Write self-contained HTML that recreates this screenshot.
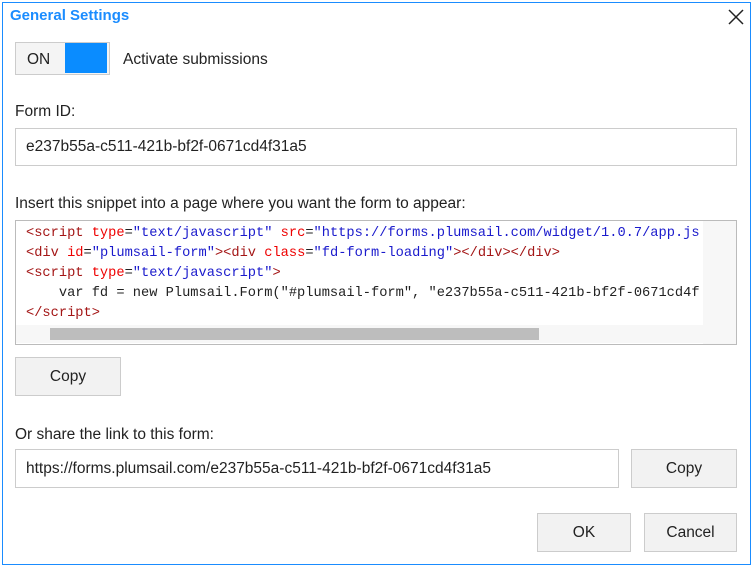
<!DOCTYPE html>
<html><head><meta charset="utf-8"><style>
*{box-sizing:border-box;margin:0;padding:0}
body{width:753px;height:568px;background:#fff;font-family:"Liberation Sans",sans-serif;color:#222;position:relative;overflow:hidden}
.dlg{position:absolute;left:2px;top:2px;width:749px;height:563px;border:1px solid #1a8cff;background:#fff}
.a{position:absolute}
.title{font-weight:bold;font-size:15px;color:#1a8cff}
.lbl{font-size:15.5px;color:#222}
.inp{border:1px solid #ccc;background:#fff;font-size:15.5px;padding-left:10px;display:flex;align-items:center}
.btn{border:1px solid #ccc;background:#f2f2f2;font-size:15.5px;display:flex;align-items:center;justify-content:center;color:#222}
.code{border:1px solid #bbb;background:#fff;font-family:"Liberation Mono",monospace;font-size:13.7px;overflow:hidden}
.code div{position:absolute;left:10px;white-space:pre;line-height:20px}
.t{color:#a31515}.k{color:#1a1acc}.r{color:#e00}
</style></head><body>
<div class="dlg"></div>
<div class="a title" style="left:10px;top:7px">General Settings</div>
<svg class="a" style="left:728px;top:9px" width="16" height="16" viewBox="0 0 16 16"><path d="M1 1L15 15M15 1L1 15" stroke="#222" stroke-width="1.5"/></svg>
<div class="a" style="left:15px;top:42px;width:95px;height:33px;border:1px solid #ccc;background:#f4f4f4"></div>
<div class="a lbl" style="left:27px;top:51px">ON</div>
<div class="a" style="left:65px;top:43px;width:42px;height:30px;background:#0a8cff"></div>
<div class="a lbl" style="left:123px;top:51px">Activate submissions</div>
<div class="a lbl" style="left:15px;top:103px">Form ID:</div>
<div class="a inp" style="left:15px;top:128px;width:722px;height:38px">e237b55a-c511-421b-bf2f-0671cd4f31a5</div>
<div class="a lbl" style="left:15px;top:195px">Insert this snippet into a page where you want the form to appear:</div>
<div class="a code" style="left:15px;top:220px;width:722px;height:125px">
<div style="top:3px"><span class="t">&lt;script</span> <span class="r">type</span>=<span class="k">"text/javascript"</span> <span class="r">src</span>=<span class="k">"https://forms.plumsail.com/widget/1.0.7/app.js</span></div>
<div style="top:23px"><span class="t">&lt;div</span> <span class="r">id</span>=<span class="k">"plumsail-form"</span><span class="t">&gt;&lt;div</span> <span class="r">class</span>=<span class="k">"fd-form-loading"</span><span class="t">&gt;&lt;/div&gt;&lt;/div&gt;</span></div>
<div style="top:43px"><span class="t">&lt;script</span> <span class="r">type</span>=<span class="k">"text/javascript"</span><span class="t">&gt;</span></div>
<div style="top:63px">    var fd = new Plumsail.Form("#plumsail-form", "e237b55a-c511-421b-bf2f-0671cd4f</div>
<div style="top:83px"><span class="t">&lt;/script&gt;</span></div>
<div style="left:687px;top:0;width:34px;height:123px;background:#f7f7f7;line-height:0"></div>
<div style="left:0;top:104px;width:687px;height:18px;background:#f7f7f7;line-height:0"></div>
<div style="left:34px;top:107px;width:489px;height:12px;background:#bdbdbd;line-height:0"></div>
</div>
<div class="a btn" style="left:15px;top:357px;width:106px;height:39px">Copy</div>
<div class="a lbl" style="left:15px;top:426px">Or share the link to this form:</div>
<div class="a inp" style="left:15px;top:449px;width:604px;height:39px">https://forms.plumsail.com/e237b55a-c511-421b-bf2f-0671cd4f31a5</div>
<div class="a btn" style="left:631px;top:449px;width:106px;height:39px">Copy</div>
<div class="a btn" style="left:537px;top:513px;width:94px;height:39px">OK</div>
<div class="a btn" style="left:644px;top:513px;width:93px;height:39px">Cancel</div>
</body></html>
